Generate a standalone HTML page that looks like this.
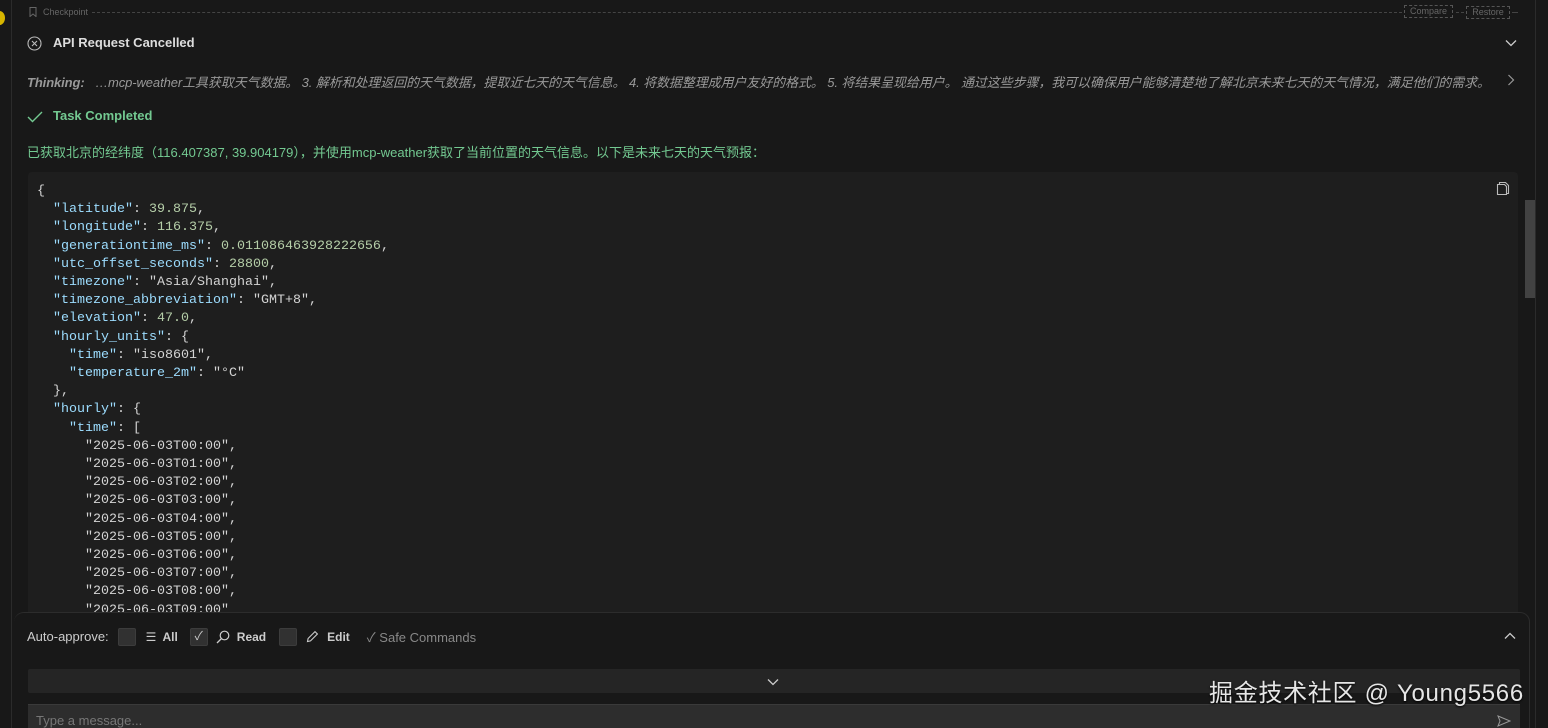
<!DOCTYPE html>
<html><head><meta charset="utf-8"><style>
*{margin:0;padding:0;box-sizing:border-box}
body{width:1548px;height:728px;overflow:hidden;background:#181818;font-family:"Liberation Sans","Noto Sans CJK SC",sans-serif;color:#ccc;position:relative}
.abs{position:absolute}
.code{position:absolute;left:28px;top:172px;width:1490px;height:460px;background:#1e1e1e;border-radius:4px}
.code pre{position:absolute;left:9px;top:11px;font-family:"Liberation Mono","DejaVu Sans Mono",monospace;font-size:13.33px;line-height:18.2px;color:#d4d4d4}
.k{color:#9cdcfe}.n{color:#b5cea8}.s{color:#d4d4d4}
.cb{display:inline-block;width:18px;height:18px;background:#313131;border:1px solid #3c3c3c;border-radius:2px;vertical-align:middle}
</style></head><body>
<div class="abs" style="left:0;top:0;width:12px;height:728px;background:#181818;border-right:1px solid #2b2b2b"></div>
<div class="abs" style="left:-6px;top:11px;width:11px;height:14px;border-radius:50%;background:#d7b500"></div>
<div class="abs" style="left:1535px;top:0;width:13px;height:728px;border-left:1px solid #2b2b2b"></div>
<div class="abs" style="left:1525px;top:200px;width:10px;height:98px;background:#424242"></div>

<svg class="abs" style="left:29px;top:7px" width="8" height="10" viewBox="0 0 8 10"><path d="M1 .5h6v9L4 7 1 9.5z" fill="none" stroke="#666" stroke-width="1"/></svg>
<div class="abs" style="left:43px;top:7px;font-size:9px;color:#666">Checkpoint</div>
<div class="abs" style="left:92px;top:12px;width:1310px;border-top:1px dashed #444"></div>
<div class="abs" style="left:1404px;top:5px;width:49px;height:13px;border:1px dashed #555;font-size:9px;color:#666;text-align:center;line-height:11px">Compare</div>
<div class="abs" style="left:1456px;top:12px;width:8px;border-top:1px dashed #444"></div>
<div class="abs" style="left:1466px;top:6px;width:44px;height:13px;border:1px dashed #555;font-size:9px;color:#666;text-align:center;line-height:11px">Restore</div>
<div class="abs" style="left:1512px;top:12px;width:6px;border-top:1px dashed #444"></div>

<svg class="abs" style="left:27px;top:36px" width="15" height="15" viewBox="0 0 15 15"><circle cx="7.5" cy="7.5" r="6.5" fill="none" stroke="#bbb" stroke-width="1.1"/><path d="M5 5l5 5M10 5l-5 5" stroke="#bbb" stroke-width="1.1"/></svg>
<div class="abs" style="left:53px;top:35px;font-size:13px;font-weight:bold;color:#ddd">API Request Cancelled</div>
<svg class="abs" style="left:1505px;top:39px" width="12" height="8" viewBox="0 0 12 8"><path d="M1 1.5l5 5 5-5" fill="none" stroke="#ccc" stroke-width="1.3"/></svg>

<div class="abs" style="left:27px;top:72px;font-size:13px;font-style:italic;color:#999;white-space:nowrap;letter-spacing:-0.1px"><b>Thinking:</b>&nbsp;&nbsp; …mcp-weather工具获取天气数据。 3. 解析和处理返回的天气数据，提取近七天的天气信息。 4. 将数据整理成用户友好的格式。 5. 将结果呈现给用户。 通过这些步骤，我可以确保用户能够清楚地了解北京未来七天的天气情况，满足他们的需求。</div>
<svg class="abs" style="left:1507px;top:74px" width="8" height="12" viewBox="0 0 8 12"><path d="M1.5 1l5 5-5 5" fill="none" stroke="#999" stroke-width="1.2"/></svg>

<svg class="abs" style="left:27px;top:111px" width="16" height="12" viewBox="0 0 16 12"><path d="M1 6l4.5 4.5L15 1" fill="none" stroke="#73c991" stroke-width="1.4"/></svg>
<div class="abs" style="left:53px;top:108px;font-size:13px;font-weight:bold;color:#73c991">Task Completed</div>
<div class="abs" style="left:27px;top:142px;font-size:13px;color:#73c991;white-space:nowrap">已获取北京的经纬度（116.407387, 39.904179），并使用mcp-weather获取了当前位置的天气信息。以下是未来七天的天气预报：</div>

<div class="code"><pre>{
  <span class="k">"latitude"</span>: <span class="n">39.875</span>,
  <span class="k">"longitude"</span>: <span class="n">116.375</span>,
  <span class="k">"generationtime_ms"</span>: <span class="n">0.011086463928222656</span>,
  <span class="k">"utc_offset_seconds"</span>: <span class="n">28800</span>,
  <span class="k">"timezone"</span>: <span class="s">"Asia/Shanghai"</span>,
  <span class="k">"timezone_abbreviation"</span>: <span class="s">"GMT+8"</span>,
  <span class="k">"elevation"</span>: <span class="n">47.0</span>,
  <span class="k">"hourly_units"</span>: {
    <span class="k">"time"</span>: <span class="s">"iso8601"</span>,
    <span class="k">"temperature_2m"</span>: <span class="s">"°C"</span>
  },
  <span class="k">"hourly"</span>: {
    <span class="k">"time"</span>: [
      <span class="s">"2025-06-03T00:00"</span>,
      <span class="s">"2025-06-03T01:00"</span>,
      <span class="s">"2025-06-03T02:00"</span>,
      <span class="s">"2025-06-03T03:00"</span>,
      <span class="s">"2025-06-03T04:00"</span>,
      <span class="s">"2025-06-03T05:00"</span>,
      <span class="s">"2025-06-03T06:00"</span>,
      <span class="s">"2025-06-03T07:00"</span>,
      <span class="s">"2025-06-03T08:00"</span>,
      <span class="s">"2025-06-03T09:00"</span></pre>
<svg class="abs" style="left:1468px;top:9px" width="14" height="15" viewBox="0 0 14 15"><path d="M3.5 3.5V1.5h6l3 3v8h-2" fill="none" stroke="#bbb" stroke-width="1.1"/><path d="M1.5 3.5h7l2 2v8h-9z" fill="none" stroke="#bbb" stroke-width="1.1"/></svg>
</div>

<div class="abs" style="left:14px;top:612px;width:1516px;height:116px;background:#181818;border-top:1px solid #2c2c2c;border-right:1px solid #2c2c2c;border-radius:10px 10px 0 0"></div>
<div class="abs" style="left:27px;top:627px;font-size:13px;color:#ccc;white-space:nowrap;display:flex;align-items:center;gap:0">
<span>Auto-approve:</span>
<span class="cb" style="margin-left:9px"></span>
<span style="margin-left:10px;font-size:12px;color:#ccc">☰</span><b style="margin-left:6px;font-size:12px">All</b>
<span class="cb" style="margin-left:12px;text-align:center;line-height:15px;color:#ccc;font-size:12px">✓</span>
<svg style="margin-left:8px" width="14" height="14" viewBox="0 0 14 14"><circle cx="8.5" cy="5.5" r="4.3" fill="none" stroke="#ccc" stroke-width="1.2"/><path d="M5.5 8.5L1 13" stroke="#ccc" stroke-width="1.3"/></svg>
<b style="margin-left:7px;font-size:12px">Read</b>
<span class="cb" style="margin-left:13px"></span>
<svg style="margin-left:9px" width="13" height="13" viewBox="0 0 13 13"><path d="M1.5 11.5l.6-3L9 1.6l2.4 2.4L4.5 10.9z" fill="none" stroke="#ccc" stroke-width="1.1"/></svg>
<b style="margin-left:8px;font-size:12px">Edit</b>
<span style="margin-left:17px;color:#888">✓ Safe Commands</span>
</div>
<svg class="abs" style="left:1504px;top:632px" width="12" height="8" viewBox="0 0 12 8"><path d="M1 6.5l5-5 5 5" fill="none" stroke="#ccc" stroke-width="1.3"/></svg>
<div class="abs" style="left:28px;top:669px;width:1492px;height:24px;background:#252525;border-radius:2px"></div>
<svg class="abs" style="left:767px;top:678px" width="12" height="8" viewBox="0 0 12 8"><path d="M1 1.5l5 5 5-5" fill="none" stroke="#ccc" stroke-width="1.3"/></svg>
<div class="abs" style="left:28px;top:704px;width:1492px;height:24px;background:#2d2d2d;border-top:1px solid #3a3a3a"></div>
<div class="abs" style="left:36px;top:713px;font-size:13px;color:#777">Type a message...</div>
<svg class="abs" style="left:1497px;top:715px" width="14" height="12" viewBox="0 0 14 12"><path d="M1 1l12 5-12 5 2-5z" fill="none" stroke="#999" stroke-width="1"/></svg>
<div class="abs" style="left:1209px;top:673px;font-size:24px;color:#e6e6e6;white-space:nowrap;text-shadow:0 1px 2px #000;letter-spacing:0.7px">掘金技术社区 @ Young5566</div>
</body></html>
